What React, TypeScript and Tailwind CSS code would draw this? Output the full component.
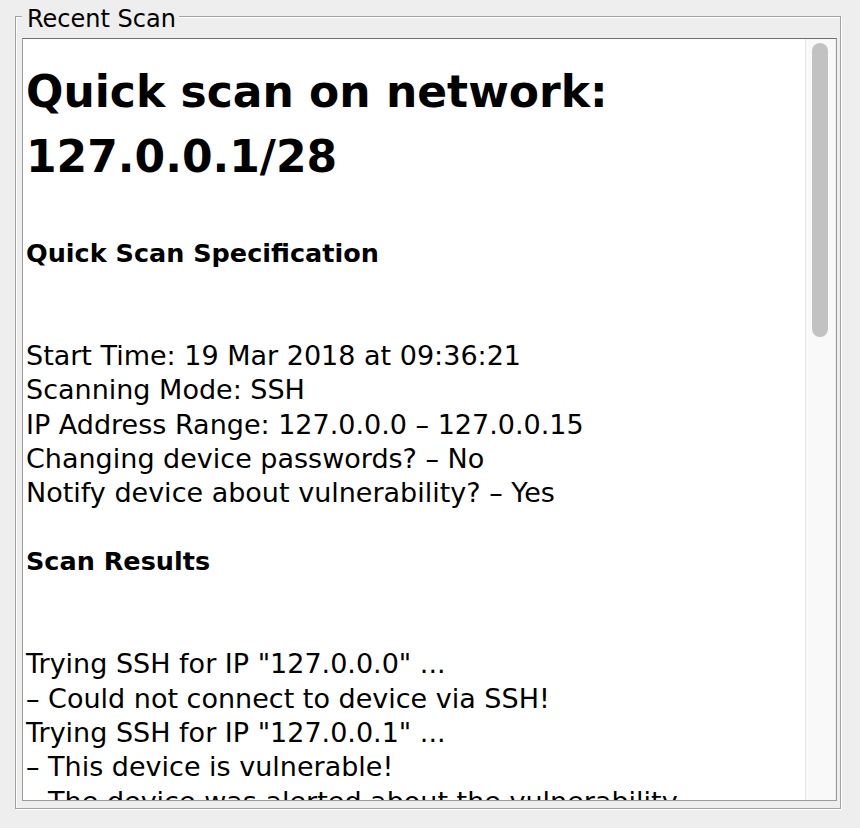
const specLines = [
  "Start Time: 19 Mar 2018 at 09:36:21",
  "Scanning Mode: SSH",
  "IP Address Range: 127.0.0.0 – 127.0.0.15",
  "Changing device passwords? – No",
  "Notify device about vulnerability? – Yes",
];

const resultLines = [
  'Trying SSH for IP "127.0.0.0" ...',
  "– Could not connect to device via SSH!",
  'Trying SSH for IP "127.0.0.1" ...',
  "– This device is vulnerable!",
  "– The device was alerted about the vulnerability",
];

export default function App() {
  return (
    <div className="w-[860px] h-[828px] bg-[#eeeeee] pt-[16px] pl-[15px] pr-[19px] pb-[19px] font-['DejaVu_Sans',sans-serif] text-black">
      {/* Titled etched border */}
      <div className="relative h-full border border-[#a2a2a2] shadow-[inset_1px_1px_0_#ffffff,1px_1px_0_#ffffff] pt-[21px] pl-[6px] pr-[3px] pb-[7px]">
        <span className="absolute left-[6px] top-[-10px] bg-[#eeeeee] pl-[5px] pr-[3px] text-[24px] leading-[24px]">
          Recent Scan
        </span>

        {/* Scroll pane */}
        <div className="flex h-full border border-[#9c9c9c] border-t-[#6e6e6e] bg-white">
          <div className="flex-1 overflow-hidden pl-[3px]">
            <h1 className="mt-[20px] text-[44px] font-bold leading-[65px]">
              Quick scan on network: 127.0.0.1/28
            </h1>
            <h3 className="mt-[47px] text-[25.5px] font-bold leading-[34px]">Quick Scan Specification</h3>
            <div className="mt-[69px] text-[27px] leading-[34.3px]">
              {specLines.map((line) => (
                <p key={line}>{line}</p>
              ))}
            </div>
            <h3 className="mt-[34px] text-[25.5px] font-bold leading-[34px]">Scan Results</h3>
            <div className="mt-[69px] text-[27px] leading-[34.3px]">
              {resultLines.map((line, i) => (
                <p key={i}>{line}</p>
              ))}
            </div>
          </div>

          {/* Scrollbar */}
          <div className="w-[31px] shrink-0 border-x border-l-[#e4e4e4] border-r-[#ececec] bg-[#f9f9f9] pl-[6px] pt-[4px]">
            <div className="w-[16px] h-[294px] rounded-full bg-[#c2c2c2]" />
          </div>
        </div>
      </div>
    </div>
  );
}
